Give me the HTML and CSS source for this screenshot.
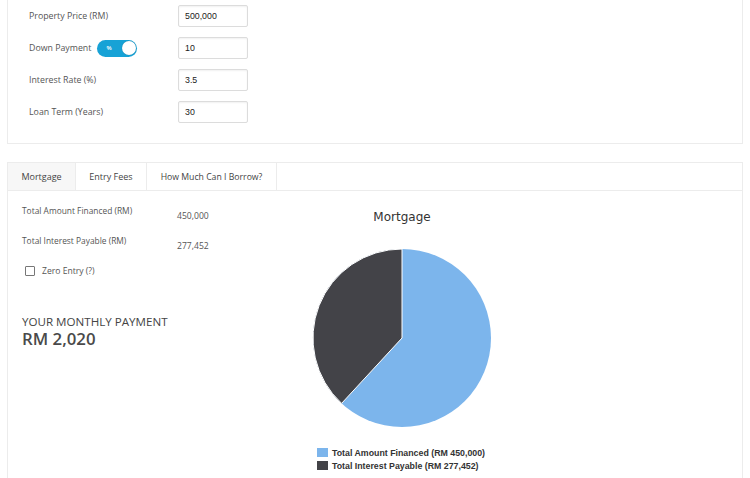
FILE: index.html
```html
<!DOCTYPE html>
<html>
<head>
<meta charset="utf-8">
<link rel="stylesheet" href="styles.css">
</head>
<body>
<div class="page">
  <section class="card inputs">
    <div class="row">
      <div class="label">Property Price (RM)</div>
      <input class="field" type="text" value="500,000">
    </div>
    <div class="row">
      <div class="label"><span>Down Payment</span><span class="toggle"><span class="pct">%</span><span class="knob"></span></span></div>
      <input class="field" type="text" value="10">
    </div>
    <div class="row">
      <div class="label">Interest Rate (%)</div>
      <input class="field" type="text" value="3.5">
    </div>
    <div class="row">
      <div class="label">Loan Term (Years)</div>
      <input class="field" type="text" value="30">
    </div>
  </section>

  <section class="card results">
    <nav class="tabs">
      <div class="tab active">Mortgage</div>
      <div class="tab">Entry Fees</div>
      <div class="tab">How Much Can I Borrow?</div>
    </nav>
    <div class="content">
      <div class="summary">
        <div class="stat"><span class="stat-label">Total Amount Financed (RM)</span><span class="stat-value">450,000</span></div>
        <div class="stat"><span class="stat-label">Total Interest Payable (RM)</span><span class="stat-value">277,452</span></div>
        <label class="check"><span class="box"></span>Zero Entry (?)</label>
        <div class="monthly">
          <div class="monthly-title">YOUR MONTHLY PAYMENT</div>
          <div class="monthly-value">RM 2,020</div>
        </div>
      </div>
      <div class="chart">
        <div class="chart-title">Mortgage</div>
        <svg class="pie" width="220" height="182" viewBox="0 0 220 182">
          <circle cx="110" cy="91" r="89" fill="#7cb5ec"/>
          <path d="M110 91 L110 2 A89 89 0 0 0 49.6 156.4 Z" fill="#434348" stroke="#ffffff" stroke-width="1"/>
        </svg>
        <div class="legend">
          <div class="legend-item"><span class="sw blue"></span>Total Amount Financed (RM 450,000)</div>
          <div class="legend-item"><span class="sw dark"></span>Total Interest Payable (RM 277,452)</div>
        </div>
      </div>
    </div>
  </section>
</div>
</body>
</html>
```
FILE: styles.css
```css
* { box-sizing: border-box; }
html, body { margin: 0; padding: 0; background: #fff; }
body { font-family: "Open Sans", "Noto Sans", sans-serif; color: #555; overflow: hidden; }
.page { padding: 0 7px; width: 750px; }
.card { border: 1px solid #ececec; background: #fff; }
.inputs { border-top: none; padding: 5px 20px 20px 21px; display: flex; flex-direction: column; gap: 10px; }
.row { display: flex; align-items: center; height: 22px; }
.label { width: 149px; font-size: 8.8px; color: #555; display: flex; align-items: center; }
.field {
  width: 70px; height: 22px; border: 1px solid #dcdcdc; border-radius: 2px;
  font-family: "Liberation Sans", Arial, sans-serif; font-size: 8.8px; color: #222;
  padding: 0 6px; box-shadow: inset 0 1px 2px rgba(0,0,0,0.06); outline: none;
}
.toggle {
  margin-left: 6px; width: 40px; height: 17px; border-radius: 9px; background: #17a2d6;
  display: inline-flex; align-items: center; justify-content: space-between; padding: 0 1.5px 0 9px;
}
.pct { color: #fff; font-size: 6px; font-weight: 600; }
.knob { width: 14px; height: 14px; border-radius: 50%; background: #fff; box-shadow: 0 0 1px rgba(0,0,0,0.3); }

.results { margin-top: 18px; border-bottom: none; height: 320px; }
.tabs { display: flex; height: 28px; border-bottom: 1px solid #ececec; }
.tab { font-size: 9px; color: #444; display: flex; align-items: center; justify-content: center; border-right: 1px solid #ececec; }
.tab:nth-child(1) { width: 68px; }
.tab:nth-child(2) { width: 71px; }
.tab:nth-child(3) { width: 130px; font-size: 8.7px; }
.tab.active { background: #f7f7f7; }

.content { display: grid; grid-template-columns: 270px 220px; padding-left: 14px; }
.summary { display: flex; flex-direction: column; padding-top: 14px; }
.stat { display: flex; height: 30px; font-size: 8.4px; }
.stat-label { width: 155px; }
.stat-value { padding-top: 5px; font-size: 8.6px; }
.check { display: flex; align-items: center; font-size: 8.6px; gap: 7px; margin-left: 3px; margin-top: 0; }
.box { width: 10px; height: 10px; border: 1px solid #777; border-radius: 1px; }
.monthly { margin-top: 38px; color: #444; }
.monthly-title { font-size: 11.6px; line-height: 14px; }
.monthly-value { font-size: 16.8px; font-weight: 600; line-height: 20px; color: #4a4a4a; }

.chart { display: flex; flex-direction: column; align-items: center; }
.chart-title { font-family: "DejaVu Sans", sans-serif; font-size: 12px; color: #333; margin-top: 19px; height: 37px; line-height: 14px; }
.pie { display: block; margin-top: 0; }
.legend { align-self: flex-start; margin-left: 25px; margin-top: 17px; font-family: "Liberation Sans", Arial, sans-serif; font-weight: bold; font-size: 8.8px; color: #333; }
.legend-item { display: flex; align-items: center; height: 13px; }
.sw { width: 11px; height: 9px; margin-right: 4px; }
.sw.blue { background: #7cb5ec; }
.sw.dark { background: #434348; }
```
